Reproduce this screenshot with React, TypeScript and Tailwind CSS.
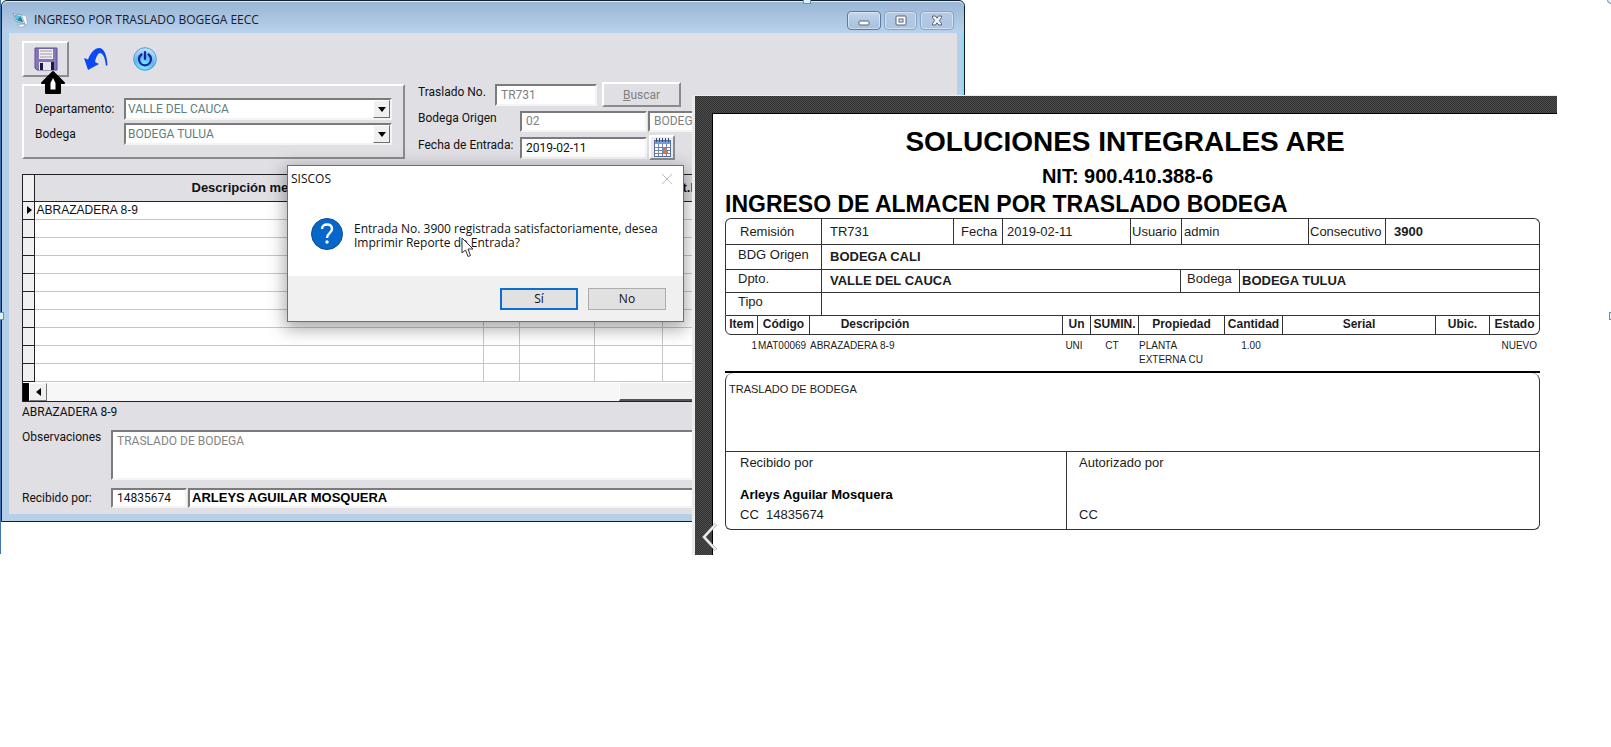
import type { ReactNode } from "react";

const sunken = "border-2 border-t-[#7b7b7b] border-l-[#7b7b7b] border-b-[#f4f4f4] border-r-[#f4f4f4]";
const raised = "border-2 border-t-white border-l-white border-b-[#8b8b8e] border-r-[#8b8b8e]";

function ComputerIcon() {
  return (
    <svg viewBox="0 0 16 16" className="size-4" aria-hidden="true">
      <path d="M1 1.500 9.500 3l3.500 9-9-2.500z" fill="#e9f6fb" stroke="#7fa3b8" strokeWidth="1" />
      <path d="M2.500 3 8.800 4.200l2.600 6.300-6.600-1.900z" fill="#1f86ab" />
      <path d="M2.500 3 8.800 4.200 4.800 8.600z" fill="#5cc0d6" />
      <path d="M9.500 3l4.500 1 1.500 8.500-2.500-.5z" fill="#f6fafc" stroke="#8aa5b5" strokeWidth=".5" />
      <path d="m5 13 6-1 3 1.500-5 2z" fill="#f3f8fa" stroke="#8aa5b5" strokeWidth=".7" />
    </svg>
  );
}

function FloppyIcon() {
  return (
    <svg viewBox="0 0 24 24" className="size-6" aria-hidden="true">
      <path d="M1 1h22v22H3l-2-2z" fill="#8676b8" stroke="#5d4f92" strokeWidth="1" />
      <rect x="5" y="2" width="14" height="10" fill="#efeff6" />
      <path d="M6 4h12M6 7h12M6 10h12" stroke="#9b98a8" strokeWidth="1" />
      <rect x="5" y="15" width="15" height="8" fill="#e7e6f0" />
      <rect x="6" y="16" width="3" height="7" fill="#20183c" />
      <rect x="17" y="15" width="3" height="8" fill="#20183c" />
    </svg>
  );
}

function UndoIcon() {
  return (
    <svg viewBox="0 0 26 26" className="size-[26px]" aria-hidden="true">
      <path d="M1 12 5 13.500C8 6 12 2 16 2c5 0 8 7 8.500 17l-1.500 1C22 12 20 7 17 7c-2 0-4 4-5 9l4 2-11 6z" fill="#0a49f5" />
    </svg>
  );
}

function PowerIcon() {
  return (
    <svg viewBox="0 0 24 24" className="size-6" aria-hidden="true">
      <defs>
        <radialGradient id="power" cx=".45" cy=".8" r=".85">
          <stop offset="0" stopColor="#7ff0ff" />
          <stop offset=".5" stopColor="#62b4f0" />
          <stop offset="1" stopColor="#e2f0fb" />
        </radialGradient>
      </defs>
      <circle cx="12" cy="12" r="11.300" fill="url(#power)" stroke="#4d9bdc" strokeWidth="1" />
      <path d="M8.500 7.500a6 6 0 1 0 7 0M12 5v7" fill="none" stroke="#15259c" strokeWidth="2.200" strokeLinecap="round" />
    </svg>
  );
}

function CalendarIcon() {
  return (
    <svg viewBox="0 0 17 19" className="h-[19px] w-[17px]" aria-hidden="true">
      <rect x=".5" y="2.500" width="16" height="16" fill="#fff" stroke="#5b6f96" />
      <rect x="1" y="3" width="15" height="3" fill="#6f9ae0" />
      <path d="M2.500 0v4M5.500 0v4M8.500 0v4M11.500 0v4M14.500 0v4" stroke="#3d4c66" />
      <path d="M1 9.500h15M1 12.500h15M1 15.500h15M4.500 6v12M8.500 6v12M12.500 6v12" stroke="#6d86b4" />
      <rect x="9" y="10" width="3" height="5" fill="#e8743a" />
      <rect x="12" y="13" width="2" height="2" fill="#e8743a" />
    </svg>
  );
}

function ClickArrow() {
  return (
    <svg viewBox="0 0 26 25" className="absolute top-[69px] left-[38px] h-[25px] w-[26px]" aria-hidden="true">
      <path d="M13 2 24 13h-4v10H6V13H2z" fill="#000" stroke="#000" strokeWidth="2" strokeLinejoin="round" />
      <path d="M13 8l2.500 5v6.500h-5V13z" fill="#fff" />
    </svg>
  );
}

function WindowButton({ label, dark, children }: { label: string; dark?: boolean; children: ReactNode }) {
  return (
    <button
      aria-label={label}
      className={
        "flex h-[19px] flex-1 items-center justify-center rounded-sm border shadow-[inset_0_0_0_1px_rgba(255,255,255,0.45)] " +
        (dark
          ? "border-[#5f7896] bg-linear-to-b from-[#c3d6ec] to-[#a4bfdd]"
          : "border-[#88a3c4] bg-linear-to-b from-[#b4cae4] to-[#adc6e3]")
      }
    >
      <svg viewBox="0 0 14 12" className="h-3 w-[14px]" aria-hidden="true">
        {children}
      </svg>
    </button>
  );
}

function Combo({ id, label, value }: { id: string; label: string; value: string }) {
  return (
    <div className="flex items-center">
      <label htmlFor={id} className="w-[89px]">
        {label}
      </label>
      <div className="relative flex-1">
        <select id={id} className={"block h-[22px] w-full appearance-none bg-white pl-0.5 text-[#5c7f7d] " + sunken}>
          <option>{value}</option>
        </select>
        <span className="pointer-events-none absolute top-0.5 right-0.5 bottom-0.5 flex w-[17px] items-center justify-center border border-t-white border-l-white border-r-[#6e6e6e] border-b-[#6e6e6e] bg-[#f0f0f0]">
          <svg viewBox="0 0 8 5" className="h-[5px] w-2" aria-hidden="true">
            <path d="M0 0h8L4 5z" />
          </svg>
        </span>
      </div>
    </div>
  );
}

const gridRows = Array.from({ length: 10 }, (_, i) => (i === 0 ? "ABRAZADERA 8-9" : ""));

function EntryWindow() {
  return (
    <section className="w-full max-w-[965px] border-l border-[#3f74ad] pb-8">
      <div className="relative rounded-t-md border border-[#10202e] bg-[#b7d0ea] text-[12px] font-['Roboto',sans-serif] text-[#111] shadow-[inset_-2px_0_0_#8fd8f5]">
        <header className="flex h-8 items-center gap-1.5 rounded-t-md border-t border-[#e2edf8] bg-linear-to-b from-[#9ab6d5] to-[#b9d1ec] pt-1 pr-[10px] pl-[10px]">
          <ComputerIcon />
          <h1 className="flex-1 text-[12px] font-['Open_Sans',sans-serif] text-[#16202e]">INGRESO POR TRASLADO BOGEGA EECC</h1>
          <div className="mb-0.5 flex w-[107px] gap-[3px] self-end pb-px">
            <WindowButton label="Minimizar" dark>
              <rect x="2" y="6" width="10" height="4" rx="1" fill="#fff" stroke="#566375" />
            </WindowButton>
            <WindowButton label="Restaurar">
              <rect x="2" y="1" width="10" height="9" rx="1" fill="#fff" stroke="#566375" />
              <rect x="5" y="4" width="4" height="3" fill="#dfe8f2" stroke="#566375" />
            </WindowButton>
            <WindowButton label="Cerrar">
              <path d="m2.500 1h3L7 3.200 8.500 1h3v1.500L9.300 5.500l2.200 3V10h-3L7 7.800 5.500 10h-3V8.500l2.200-3-2.200-3z" fill="#f2f6fa" stroke="#566375" />
            </WindowButton>
          </div>
        </header>

        <main className="mr-[7px] mb-[7px] ml-[7px] bg-[#e0dfe4] pt-2 pr-3 pb-1.5 pl-[13px]">
          <div className="flex h-9 items-center">
            <button aria-label="Guardar" className={"flex h-9 w-[47px] items-center justify-center " + raised}>
              <FloppyIcon />
            </button>
            <button aria-label="Deshacer" className="ml-[14px]">
              <UndoIcon />
            </button>
            <button aria-label="Salir" className="ml-6">
              <PowerIcon />
            </button>
          </div>

          <div className="mt-[5px] flex gap-[13px]">
            <div className={"mt-0.5 flex h-[75px] w-[383px] flex-col gap-[3px] px-[11px] pt-3 " + raised}>
              <Combo id="depto" label="Departamento:" value="VALLE DEL CAUCA" />
              <Combo id="bodega" label="Bodega" value="BODEGA TULUA" />
            </div>
            <div className="flex flex-1 flex-col gap-[3px] text-[#808080]">
              <div className="flex h-[25px] items-center">
                <label htmlFor="traslado" className="w-[77px] pb-1.5 text-[#111]">
                  Traslado No.
                </label>
                <input id="traslado" readOnly defaultValue="TR731" className={"h-[22px] w-[102px] bg-white px-1 " + sunken} />
                <button className={"ml-[5px] h-[25px] w-[79px] " + raised}>
                  <u>B</u>uscar
                </button>
              </div>
              <div className="flex h-[22px] items-center">
                <label htmlFor="origen" className="w-[102px] pb-1.5 text-[#111]">
                  Bodega Origen
                </label>
                <input id="origen" readOnly defaultValue="02" className={"h-[21px] w-[127px] bg-white px-1 " + sunken} />
                <input aria-label="Nombre de bodega" readOnly defaultValue="BODEGA CALI" className={"ml-px h-[21px] w-[200px] bg-white px-1 " + sunken} />
              </div>
              <div className="flex h-[25px] items-center">
                <label htmlFor="fecha" className="w-[102px] pb-1.5 text-[#111]">
                  Fecha de Entrada:
                </label>
                <input id="fecha" defaultValue="2019-02-11" className={"h-[22px] w-[127px] bg-white px-1 text-[#111] " + sunken} />
                <button aria-label="Calendario" className={"ml-0.5 flex h-[25px] w-[26px] items-center justify-center bg-[#ececf0] " + raised}>
                  <CalendarIcon />
                </button>
              </div>
            </div>
          </div>

          <div className="mt-3.5 border border-[#222] bg-white">
            <table className="w-full table-fixed border-collapse">
              <colgroup>
                <col className="w-[11px]" />
                <col className="w-[449px]" />
                <col className="w-9" />
                <col className="w-[75px]" />
                <col className="w-[68px]" />
                <col />
              </colgroup>
              <thead>
                <tr className="h-[26px] bg-[#e0dfe4] text-left text-[13px] font-['Liberation_Sans',sans-serif]">
                  <th className="border-r border-b border-[#222] bg-[#f0f0f0]" />
                  <th className="border-r border-b border-[#222] p-0 pl-[157px]">Descripción mer</th>
                  <th className="border-r border-b border-[#222] p-0" />
                  <th className="border-r border-b border-[#222] p-0" />
                  <th className="border-r border-b border-[#222] p-0" />
                  <th className="border-b border-[#222] p-0 pl-5">t.I</th>
                </tr>
              </thead>
              <tbody>
                {gridRows.map((text, i) => (
                  <tr key={i} className="h-[18px] leading-4">
                    <td className="border-r border-b border-[#222] bg-[#f0f0f0] p-0">
                      {i === 0 && (
                        <svg viewBox="0 0 5 8" className="ml-1 h-2 w-[5px]" aria-hidden="true">
                          <path d="M0 0l5 4-5 4z" />
                        </svg>
                      )}
                    </td>
                    <td className="border-r border-b border-[#c6c6c6] p-0 pl-0.5 text-[12px] font-['Liberation_Sans',sans-serif]">{text}</td>
                    <td className="border-r border-b border-[#c6c6c6]" />
                    <td className="border-r border-b border-[#c6c6c6]" />
                    <td className="border-r border-b border-[#c6c6c6]" />
                    <td className="border-b border-[#c6c6c6]" />
                  </tr>
                ))}
              </tbody>
            </table>
            <div className="mt-px flex h-[18px] bg-[#f7f7f7]">
              <span className="w-1.5 bg-black" />
              <button aria-label="Desplazar a la izquierda" className="flex w-[18px] items-center justify-center border border-t-white border-l-white border-r-[#777] border-b-[#777] bg-[#f0f0f0]">
                <svg viewBox="0 0 5 8" className="h-2 w-[5px]" aria-hidden="true">
                  <path d="M5 0v8L0 4z" />
                </svg>
              </button>
              <span className="ml-[572px] flex-1 border-b-2 border-l border-[#555] border-l-white bg-[#f0f0f0]" />
            </div>
          </div>

          <p className="leading-5">ABRAZADERA 8-9</p>
          <div className="mt-2 flex">
            <label htmlFor="obs" className="w-[89px] leading-[14px]">
              Observaciones
            </label>
            <textarea id="obs" readOnly defaultValue="TRASLADO DE BODEGA" className={"h-[50px] flex-1 resize-none bg-white px-1 leading-[18px] text-[#858585] " + sunken} />
          </div>
          <div className="mt-2 flex items-center">
            <label htmlFor="recibido" className="w-[89px]">
              Recibido por:
            </label>
            <input id="recibido" defaultValue="14835674" className={"h-5 w-[76px] bg-white px-1 " + sunken} />
            <input aria-label="Nombre de quien recibe" defaultValue="ARLEYS AGUILAR MOSQUERA" className={"ml-px h-5 min-w-0 flex-1 bg-white px-0.5 text-[13px] font-bold font-['Liberation_Sans',sans-serif] text-black " + sunken} />
          </div>
        </main>
        <ClickArrow />
      </div>
    </section>
  );
}

function ConfirmDialog() {
  return (
    <div
      role="dialog"
      aria-labelledby="dialog-title"
      className="absolute top-[165px] left-[287px] w-[397px] border border-[#6f6f6f] bg-white text-[12px] font-['Open_Sans',sans-serif] text-[#111] shadow-[0_5px_16px_2px_rgba(0,0,0,0.35)]"
    >
      <div className="flex h-[26px] items-center justify-between pr-2.5 pl-[3px]">
        <h2 id="dialog-title">SISCOS</h2>
        <button aria-label="Cerrar mensaje">
          <svg viewBox="0 0 12 12" className="size-3" aria-hidden="true">
            <path d="m1 1 10 10M11 1 1 11" stroke="#bdbdbd" fill="none" />
          </svg>
        </button>
      </div>
      <div className="flex h-[84px] gap-[11px] pt-[26px] pl-[23px]">
        <svg viewBox="0 0 32 32" className="size-8" aria-hidden="true">
          <circle cx="16" cy="16" r="15.500" fill="#0766c9" stroke="#0a4f94" />
          <path d="M11 11c0-3 2-4.500 5-4.500s5 1.700 5 4.500c0 4-5 4.500-5 9" fill="none" stroke="#fff" strokeWidth="2.400" />
          <circle cx="16" cy="24" r="1.700" fill="#fff" />
        </svg>
        <p className="pt-1 leading-[14px]">
          Entrada No. 3900 registrada satisfactoriamente, desea
          <br />
          Imprimir Reporte de Entrada?
        </p>
      </div>
      <div className="flex h-[45px] justify-end gap-2.5 bg-[#f0f0f0] pt-3 pr-[17px]">
        <button className="h-[22px] w-[78px] border-2 border-[#0a6fd0] bg-[#e1e1e1]">Sí</button>
        <button className="h-[22px] w-[78px] border border-[#adadad] bg-[#e1e1e1]">No</button>
      </div>
      <svg viewBox="0 0 14 21" className="absolute top-[71px] left-[173px] h-[21px] w-[14px]" aria-hidden="true">
        <path d="M1 1v15l3.500-3 2.500 6.500 2.500-1L7 12h5z" fill="#fff" stroke="#333" />
      </svg>
    </div>
  );
}

const items = [
  { n: "1", code: "MAT00069", desc: "ABRAZADERA 8-9", unit: "UNI", sumin: "CT", prop: "PLANTA EXTERNA CU", qty: "1.00", serial: "", ubic: "", state: "NUEVO" },
];

const dither = "bg-[repeating-conic-gradient(#343434_0%_25%,#4b4b4b_0%_50%)] bg-[length:2px_2px]";

function Report() {
  const th = "border-y border-r border-[#333] p-0 pb-0.5";
  return (
    <article className="absolute top-[95px] right-[54px] left-[692px] min-h-[460px] border-t border-l-3 border-[#ececec] bg-white text-[13px] leading-4 font-['Liberation_Sans',sans-serif] text-[#1c1c22]">
      <div className={"h-[17px] " + dither} />
      <div className="flex">
        <div className={"min-h-[442px] w-[17px] " + dither} />
        <div className="flex-1 border-t border-l border-black pr-[17px] pl-3">
          <header className="font-bold text-black">
            <h2 className="mt-2 pr-[15px] text-center text-[28px] leading-10">SOLUCIONES INTEGRALES ARE</h2>
            <p className="pr-[10px] text-center text-[20px] leading-7">NIT: 900.410.388-6</p>
            <h3 className="text-[23px] leading-7">INGRESO DE ALMACEN POR TRASLADO BODEGA</h3>
          </header>

          <dl className="rounded-t-md border border-b-0 border-[#333]">
            <div className="flex h-[26px] items-center border-b border-[#333] *:flex *:h-full *:items-center *:border-[#333]">
              <dt className="w-24 border-r pl-3.5">Remisión</dt>
              <dd className="w-[132px] border-r pl-2">TR731</dd>
              <dt className="w-[49px] border-r pl-[7px]">Fecha</dt>
              <dd className="w-32 border-r pl-1">2019-02-11</dd>
              <dt className="w-[51px] border-r pl-px">Usuario</dt>
              <dd className="w-[127px] border-r pl-0.5">admin</dd>
              <dt className="w-[77px] border-r pl-px">Consecutivo</dt>
              <dd className="pl-2 font-bold">3900</dd>
            </div>
            <div className="flex h-[25px] items-center border-b border-[#333] *:flex *:h-full *:items-center *:border-[#333]">
              <dt className="w-24 border-r pb-1 pl-3">BDG Origen</dt>
              <dd className="pl-2 font-bold">BODEGA CALI</dd>
            </div>
            <div className="flex h-[23px] items-center border-b border-[#333] *:flex *:h-full *:items-center *:border-[#333]">
              <dt className="w-24 border-r pb-1 pl-3">Dpto.</dt>
              <dd className="w-[359px] border-r pl-2 font-bold">VALLE DEL CAUCA</dd>
              <dt className="w-[59px] border-r pb-1 pl-1.5">Bodega</dt>
              <dd className="pl-0.5 font-bold">BODEGA TULUA</dd>
            </div>
            <div className="flex h-[22px] items-center *:flex *:h-full *:items-center *:border-[#333]">
              <dt className="w-24 border-r pb-1 pl-3">Tipo</dt>
              <dd />
            </div>
          </dl>

          <table className="w-full table-fixed border-separate border-spacing-0 text-[10px] leading-[14px]">
            <colgroup>
              <col className="w-[33px]" />
              <col className="w-[52px]" />
              <col />
              <col className="w-7" />
              <col className="w-12" />
              <col className="w-[86px]" />
              <col className="w-[58px]" />
              <col className="w-[153px]" />
              <col className="w-[54px]" />
              <col className="w-[50px]" />
            </colgroup>
            <thead>
              <tr className="h-5 text-[12px]">
                <th className={"rounded-bl-md border-l " + th}>Item</th>
                <th className={th}>Código</th>
                <th className={th + " pr-[122px]"}>Descripción</th>
                <th className={th}>Un</th>
                <th className={th}>SUMIN.</th>
                <th className={th}>Propiedad</th>
                <th className={th}>Cantidad</th>
                <th className={th}>Serial</th>
                <th className={th}>Ubic.</th>
                <th className={"rounded-br-md " + th}>Estado</th>
              </tr>
            </thead>
            <tbody>
              {items.map((it) => (
                <tr key={it.code} className="h-9 align-top *:pt-1">
                  <td className="pr-px text-right">{it.n}</td>
                  <td>{it.code}</td>
                  <td>{it.desc}</td>
                  <td className="pr-1.5 text-center">{it.unit}</td>
                  <td className="pr-1.5 text-center">{it.sumin}</td>
                  <td className="pr-4">{it.prop}</td>
                  <td className="pr-1.5 text-center">{it.qty}</td>
                  <td>{it.serial}</td>
                  <td>{it.ubic}</td>
                  <td className="pr-[3px] text-right">{it.state}</td>
                </tr>
              ))}
            </tbody>
          </table>

          <div className="border-t-2 border-black">
            <div className="rounded-md rounded-t-lg border border-t-0 border-[#333]">
              <p className="h-[79px] border-b border-[#333] pt-2 pl-[3px] text-[11px]">TRASLADO DE BODEGA</p>
              <div className="flex h-[77px] pl-3.5">
                <div className="w-[327px] border-r border-[#333] pt-[3px]">
                  <p>Recibido por</p>
                  <p className="mt-4 font-bold text-black">Arleys Aguilar Mosquera</p>
                  <p className="mt-1 whitespace-pre">CC  14835674</p>
                </div>
                <div className="pt-[3px] pl-3">
                  <p>Autorizado por</p>
                  <p className="mt-9">CC</p>
                </div>
              </div>
            </div>
          </div>
        </div>
      </div>
      <button aria-label="Anterior" className="absolute top-[427px] left-[7px]">
        <svg viewBox="0 0 15 28" className="h-7 w-[15px]" aria-hidden="true">
          <path d="M14 1 2 14l12 13" fill="none" stroke="#9a9a9a" strokeWidth="3" />
          <path d="M14 1 2 14l12 13" fill="none" stroke="#f0f0f0" strokeWidth="2" />
        </svg>
      </button>
    </article>
  );
}

export default function App() {
  const handle = "absolute border border-[#5f93b8] bg-[#dff3fb]";
  return (
    <div className="relative min-h-screen overflow-hidden bg-white">
      <EntryWindow />
      <ConfirmDialog />
      <Report />
      <span className={handle + " top-[312px] -left-1 size-2"} />
      <span className={handle + " -top-1 left-[803px] size-2"} />
      <span className={handle + " top-[312px] -right-1.5 size-2"} />
      <span className={handle + " -top-1 -right-1 size-2 rounded-full"} />
    </div>
  );
}
